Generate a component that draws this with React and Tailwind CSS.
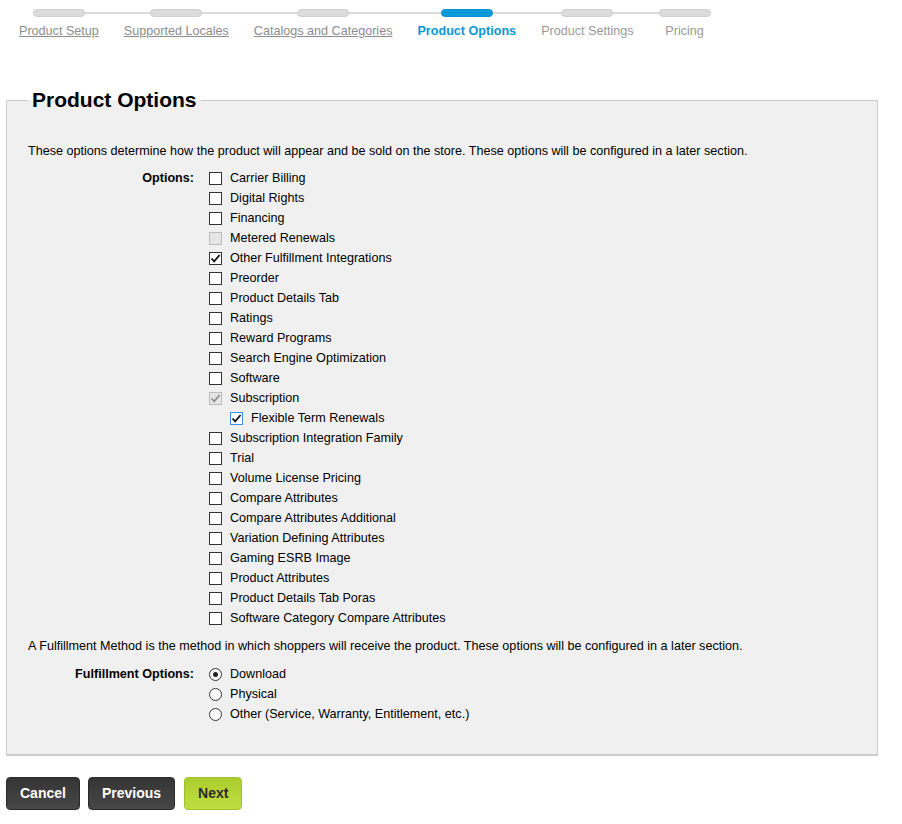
import React, { useState } from 'react';

const steps = [
  { label: 'Product Setup', state: 'done' },
  { label: 'Supported Locales', state: 'done' },
  { label: 'Catalogs and Categories', state: 'done' },
  { label: 'Product Options', state: 'active' },
  { label: 'Product Settings', state: 'todo' },
  { label: 'Pricing', state: 'todo' },
];

const initialOptions = [
  { name: 'Carrier Billing' },
  { name: 'Digital Rights' },
  { name: 'Financing' },
  { name: 'Metered Renewals', disabled: true },
  { name: 'Other Fulfillment Integrations', checked: true },
  { name: 'Preorder' },
  { name: 'Product Details Tab' },
  { name: 'Ratings' },
  { name: 'Reward Programs' },
  { name: 'Search Engine Optimization' },
  { name: 'Software' },
  { name: 'Subscription', checked: true, disabled: true },
  { name: 'Flexible Term Renewals', checked: true, nested: true, focus: true },
  { name: 'Subscription Integration Family' },
  { name: 'Trial' },
  { name: 'Volume License Pricing' },
  { name: 'Compare Attributes' },
  { name: 'Compare Attributes Additional' },
  { name: 'Variation Defining Attributes' },
  { name: 'Gaming ESRB Image' },
  { name: 'Product Attributes' },
  { name: 'Product Details Tab Poras' },
  { name: 'Software Category Compare Attributes' },
];

const fulfillment = ['Download', 'Physical', 'Other (Service, Warranty, Entitlement, etc.)'];

function CheckBox({ checked, disabled, focus, onClick }) {
  const box = disabled
    ? 'border-[#bcbcbc] bg-[#e6e6e6]'
    : focus
      ? 'border-[#3c8ee6] bg-white'
      : 'border-[#333] bg-white';
  return (
    <span
      onClick={disabled ? undefined : onClick}
      className={`flex h-[13px] w-[13px] shrink-0 items-center justify-center border ${box}`}
    >
      {checked && (
        <svg width="11" height="11" viewBox="0 0 11 11">
          <path
            d="M1.5 5.5 L4.2 8.3 L9.6 2"
            fill="none"
            stroke={disabled ? '#8f8f8f' : '#111'}
            strokeWidth="1.8"
          />
        </svg>
      )}
    </span>
  );
}

function Radio({ checked, onClick }) {
  return (
    <span
      onClick={onClick}
      className="flex h-[13px] w-[13px] shrink-0 items-center justify-center rounded-full border border-[#333] bg-white"
    >
      {checked && <span className="h-[5px] w-[5px] rounded-full bg-[#222]" />}
    </span>
  );
}

export default function App() {
  const [options, setOptions] = useState(initialOptions);
  const [method, setMethod] = useState(0);

  const toggle = (i) => {
    setOptions(options.map((o, idx) => (idx === i ? { ...o, checked: !o.checked } : o)));
  };

  return (
    <div className="min-h-[824px] bg-white text-[12.6px] text-black" style={{ fontFamily: '"Liberation Sans", Arial, sans-serif' }}>
      {/* Wizard steps */}
      <div className="relative ml-[19px] inline-flex gap-[25px] pt-[9px]">
        <div className="absolute left-[14px] right-0 top-[12px] h-[2px] bg-[#dcdcdc]" />
        {steps.map((s) => (
          <div key={s.label} className="relative flex min-w-[52px] flex-col items-center">
            <div
              className={`h-[8px] w-[52px] rounded-full border ${
                s.state === 'active' ? 'border-[#0a90d0] bg-[#0a9ad9]' : 'border-[#cfcfcf] bg-[#dcdcdc]'
              }`}
            />
            <span
              className={`mt-[6px] whitespace-nowrap text-[12.6px] leading-[17px] ${
                s.state === 'active'
                  ? 'font-bold text-[#0a96d6]'
                  : s.state === 'done'
                    ? 'text-[#8c8c8c] underline'
                    : 'text-[#9a9a9a]'
              }`}
            >
              {s.label}
            </span>
          </div>
        ))}
      </div>

      {/* Product options panel */}
      <fieldset className="ml-[6px] mt-[48px] w-[872px] border border-b-2 border-[#cccccc] bg-[#f0f0f0] px-[21px] pb-[30px]">
        <legend className="px-[4px] text-[21px] font-bold leading-[24px]">Product Options</legend>
        <p className="mt-[32px] leading-[15px]">
          These options determine how the product will appear and be sold on the store. These options will be configured in a later section.
        </p>

        <div className="mt-[9px] flex">
          <div className="w-[166px] pt-[3px] text-right font-bold leading-[15px]">Options:</div>
          <div className="ml-[15px] flex flex-col">
            {options.map((o, i) => (
              <label
                key={o.name}
                className={`flex h-[20px] items-center gap-[8px] ${o.nested ? 'pl-[21px]' : ''}`}
              >
                <CheckBox checked={o.checked} disabled={o.disabled} focus={o.focus} onClick={() => toggle(i)} />
                <span className="leading-[15px]">{o.name}</span>
              </label>
            ))}
          </div>
        </div>

        <p className="mt-[11px] leading-[15px]">
          A Fulfillment Method is the method in which shoppers will receive the product. These options will be configured in a later section.
        </p>

        <div className="mt-[10px] flex">
          <div className="w-[166px] pt-[3px] text-right font-bold leading-[15px]">Fulfillment Options:</div>
          <div className="ml-[15px] flex flex-col">
            {fulfillment.map((f, i) => (
              <label key={f} className="flex h-[20px] items-center gap-[8px]">
                <Radio checked={method === i} onClick={() => setMethod(i)} />
                <span className="leading-[15px]">{f}</span>
              </label>
            ))}
          </div>
        </div>
      </fieldset>

      {/* Footer buttons */}
      <div className="ml-[6px] mt-[21px] flex gap-[8px]">
        <button className="h-[33px] rounded-[4px] border border-[#2a2a2a] bg-gradient-to-b from-[#353535] to-[#474747] px-[13px] text-[14px] font-bold text-white">
          Cancel
        </button>
        <button className="h-[33px] rounded-[4px] border border-[#2a2a2a] bg-gradient-to-b from-[#353535] to-[#474747] px-[13px] text-[14px] font-bold text-white">
          Previous
        </button>
        <button className="ml-[1px] h-[33px] rounded-[4px] border border-[#9fc22c] bg-gradient-to-b from-[#aacd2c] to-[#c0de42] px-[13px] text-[14px] font-bold text-[#2b2b2b]">
          Next
        </button>
      </div>
    </div>
  );
}
